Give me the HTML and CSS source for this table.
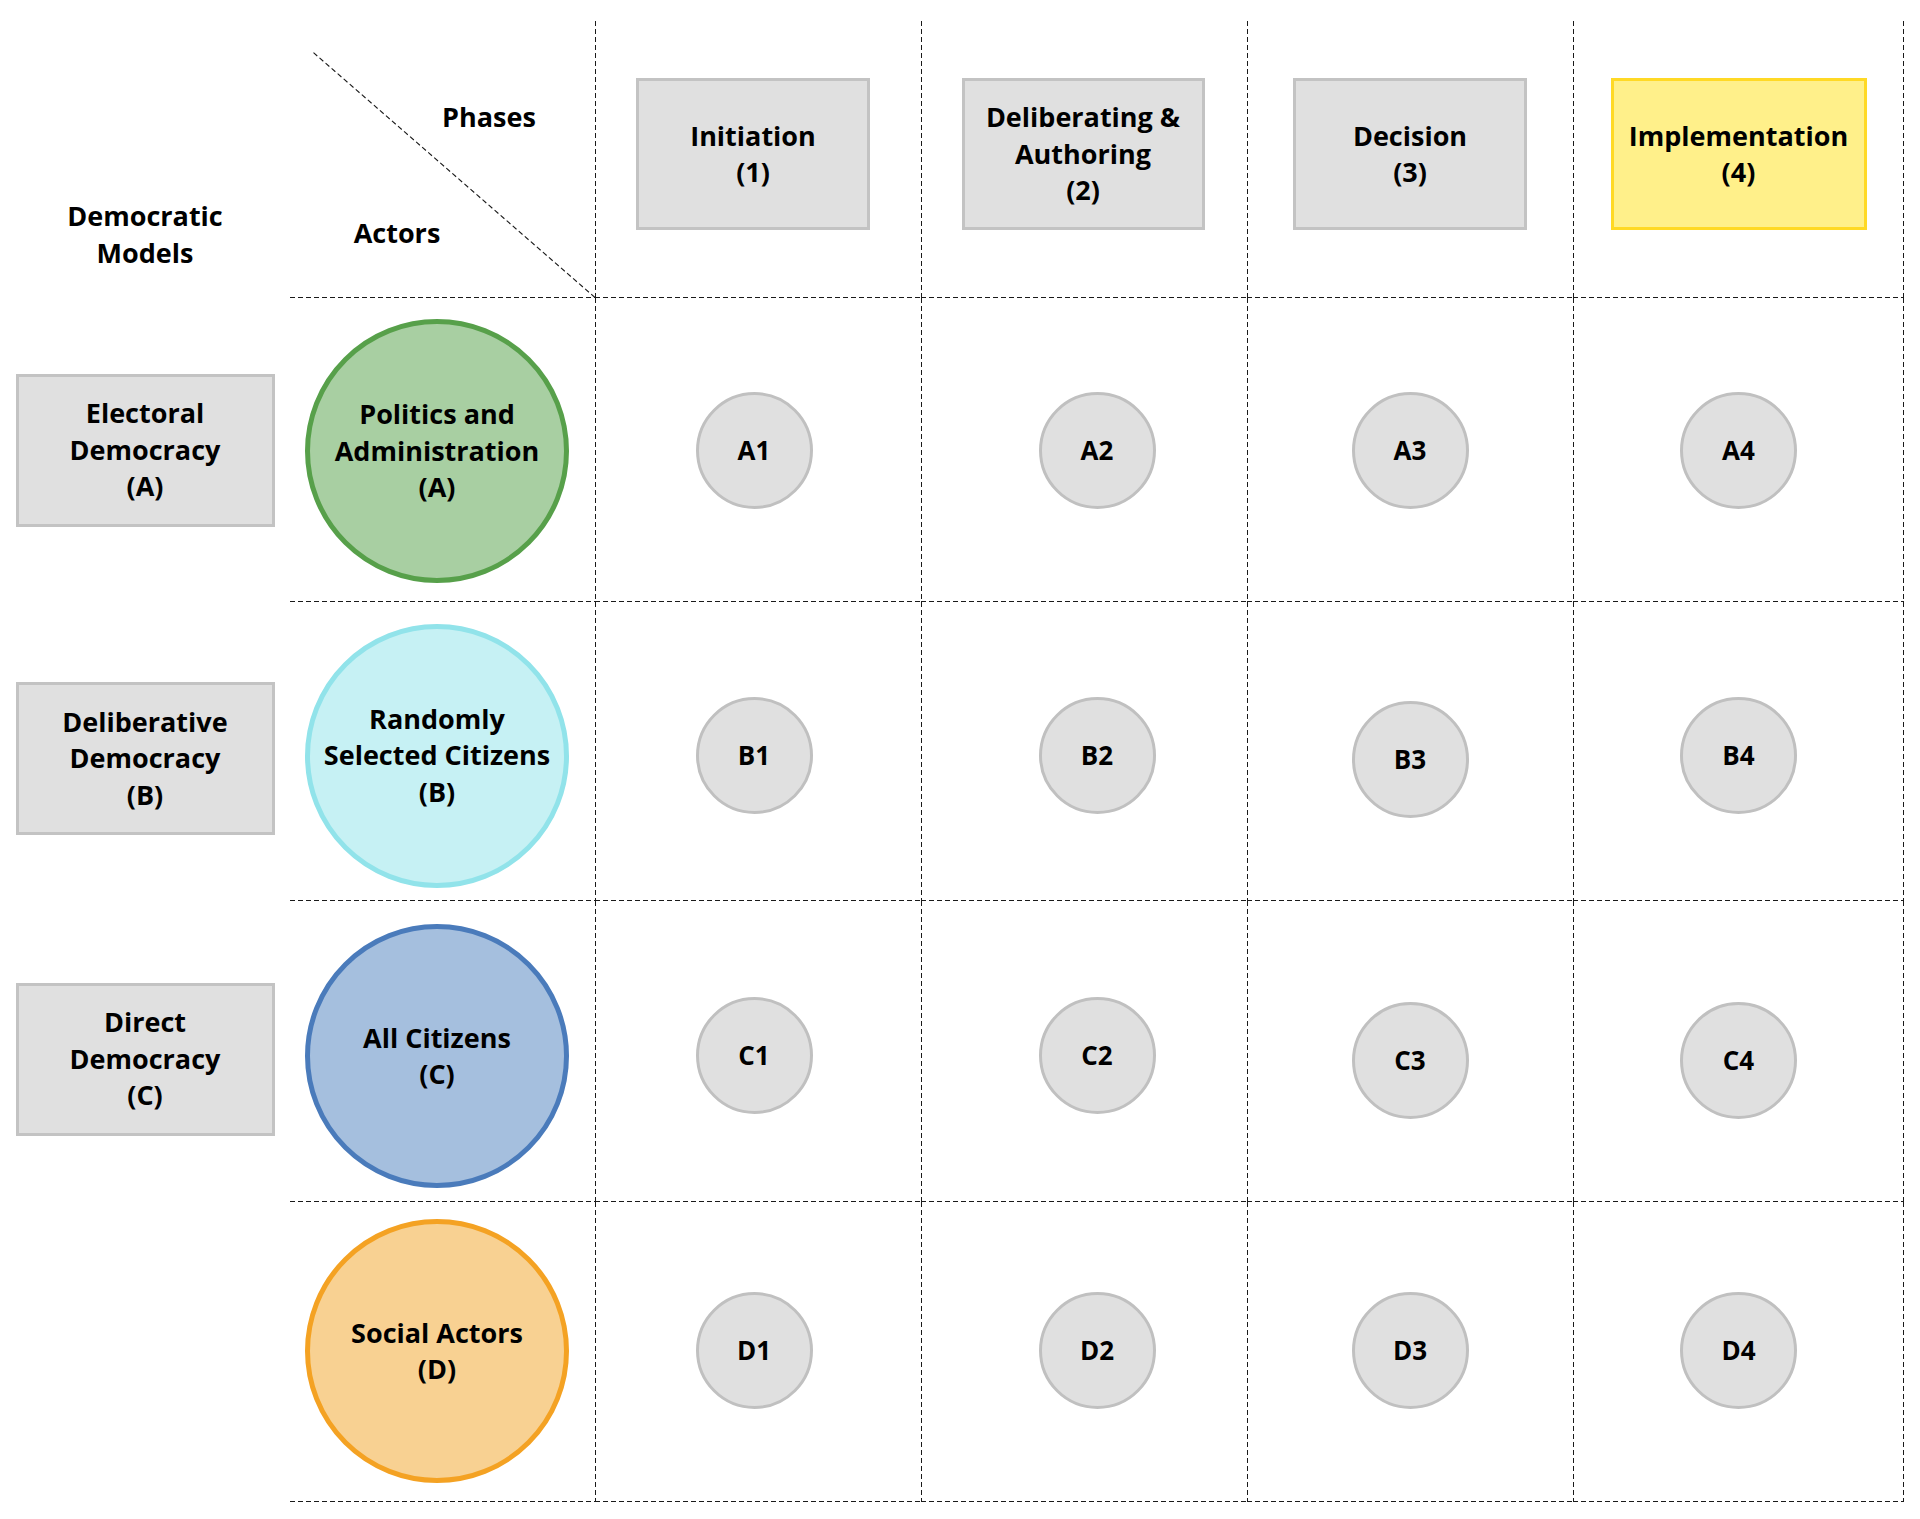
FILE: index.html
```html
<!DOCTYPE html>
<html lang="en">
<head>
<meta charset="utf-8">
<title>Democratic Models, Actors and Phases</title>
<link rel="stylesheet" href="styles.css">
</head>
<body>
<div class="board">
  <!-- header row -->
  <div class="models-head"><div class="models-title">Democratic<br>Models</div></div>
  <div class="corner">
    <svg class="diag" width="305" height="277" viewBox="0 0 305 277" aria-hidden="true">
      <line x1="23.5" y1="31.7" x2="305" y2="276.5" stroke="#1a1a1a" stroke-width="1.1" stroke-dasharray="5 3"/>
    </svg>
    <div class="lbl lbl-phases">Phases</div>
    <div class="lbl lbl-actors">Actors</div>
  </div>
  <div class="grid-cell"><div class="phase p1">Initiation<br>(1)</div></div>
  <div class="grid-cell"><div class="phase p2">Deliberating &amp;<br>Authoring<br>(2)</div></div>
  <div class="grid-cell"><div class="phase">Decision<br>(3)</div></div>
  <div class="grid-cell last"><div class="phase p4">Implementation<br>(4)</div></div>

  <!-- row A -->
  <div class="model-cell"><div class="model">Electoral<br>Democracy<br>(A)</div></div>
  <div class="actor-cell"><div class="actor actor-a">Politics and<br>Administration<br>(A)</div></div>
  <div class="grid-cell"><div class="dot x1">A1</div></div>
  <div class="grid-cell"><div class="dot x2">A2</div></div>
  <div class="grid-cell"><div class="dot">A3</div></div>
  <div class="grid-cell last"><div class="dot">A4</div></div>

  <!-- row B -->
  <div class="model-cell"><div class="model model-low">Deliberative<br>Democracy<br>(B)</div></div>
  <div class="actor-cell"><div class="actor actor-b">Randomly<br>Selected Citizens<br>(B)</div></div>
  <div class="grid-cell"><div class="dot x1 y-b">B1</div></div>
  <div class="grid-cell"><div class="dot x2 y-b">B2</div></div>
  <div class="grid-cell"><div class="dot y-b2">B3</div></div>
  <div class="grid-cell last"><div class="dot y-b">B4</div></div>

  <!-- row C -->
  <div class="model-cell"><div class="model model-low2">Direct<br>Democracy<br>(C)</div></div>
  <div class="actor-cell"><div class="actor actor-c">All Citizens<br>(C)</div></div>
  <div class="grid-cell"><div class="dot x1 y-c">C1</div></div>
  <div class="grid-cell"><div class="dot x2 y-c">C2</div></div>
  <div class="grid-cell"><div class="dot y-c2">C3</div></div>
  <div class="grid-cell last"><div class="dot y-c2">C4</div></div>

  <!-- row D -->
  <div class="model-cell"></div>
  <div class="actor-cell"><div class="actor actor-d">Social Actors<br>(D)</div></div>
  <div class="grid-cell"><div class="dot x1 y-d">D1</div></div>
  <div class="grid-cell"><div class="dot x2 y-d">D2</div></div>
  <div class="grid-cell"><div class="dot y-d">D3</div></div>
  <div class="grid-cell last"><div class="dot y-d">D4</div></div>
</div>
</body>
</html>
```

FILE: styles.css
```css
:root {
  --dash-h: repeating-linear-gradient(90deg, #1a1a1a 0 5px, transparent 5px 8px);
  --dash-v: repeating-linear-gradient(180deg, #1a1a1a 0 5px, transparent 5px 8px);
}

html, body {
  margin: 0;
  padding: 0;
  background: #ffffff;
}

body {
  font-family: "Open Sans", "Noto Sans", "DejaVu Sans", sans-serif;
  font-weight: 700;
  font-size: 27px;
  line-height: 36.5px;
  color: #000;
}

.board {
  display: grid;
  grid-template-columns: 290px 305px 326px 326px 326px 331px;
  grid-template-rows: 277px 304px 299px 301px 300px;
  padding-top: 21px;
  width: 1904px;
}

/* header */
.models-head {
  display: flex;
  justify-content: center;
  padding-top: 177px;
  text-align: center;
}

.corner {
  position: relative;
  background: var(--dash-h) left bottom / 100% 1px no-repeat;
}

.diag {
  position: absolute;
  left: 0;
  top: 0;
}

.lbl {
  width: 200px;
  text-align: center;
  white-space: nowrap;
}

.lbl-phases {
  margin-left: 99px;
  margin-top: 78px;
}

.lbl-actors {
  margin-left: 7px;
  margin-top: 79px;
}

/* grid cells with dashed lines */
.grid-cell {
  display: flex;
  align-items: center;
  justify-content: center;
  background:
    var(--dash-h) left bottom / 100% 1px no-repeat,
    var(--dash-v) left top / 1px 100% no-repeat;
}

.grid-cell.last {
  background:
    var(--dash-h) left bottom / 100% 1px no-repeat,
    var(--dash-v) left top / 1px 100% no-repeat,
    var(--dash-v) right top / 1px 100% no-repeat;
}

.actor-cell {
  display: flex;
  align-items: center;
  justify-content: center;
  background: var(--dash-h) left bottom / 100% 1px no-repeat;
}

.model-cell {
  display: flex;
  align-items: center;
  justify-content: center;
}

/* phase boxes */
.phase {
  box-sizing: border-box;
  width: 234px;
  height: 152px;
  margin-bottom: 11px;
  border: 3px solid #c3c3c3;
  background: #e0e0e0;
  display: flex;
  align-items: center;
  justify-content: center;
  text-align: center;
  white-space: nowrap;
}

.phase.p1 { margin-right: 10px; }
.phase.p2 { width: 243px; margin-right: 2px; }
.phase.p4 {
  width: 256px;
  background: #fff08a;
  border-color: #ffd925;
}

/* democratic model boxes */
.model {
  box-sizing: border-box;
  width: 259px;
  height: 153px;
  border: 3px solid #c3c3c3;
  background: #e0e0e0;
  display: flex;
  align-items: center;
  justify-content: center;
  text-align: center;
  white-space: nowrap;
}

.model-low { margin-top: 14px; }
.model-low2 { margin-top: 15px; }

/* actor circles */
.actor {
  box-sizing: border-box;
  width: 264px;
  height: 264px;
  border-radius: 50%;
  border: 5px solid;
  margin-right: 11px;
  display: flex;
  align-items: center;
  justify-content: center;
  text-align: center;
  white-space: nowrap;
}

.actor-a {
  background: #a8cfa2;
  border-color: #57a04a;
  margin-top: 2px;
}

.actor-b {
  background: #c6f1f4;
  border-color: #91e3ea;
  margin-top: 8px;
}

.actor-c {
  background: #a5bfde;
  border-color: #4a7bbb;
  margin-top: 9px;
}

.actor-d {
  background: #f8d192;
  border-color: #f4a223;
  margin-bottom: 2px;
}

/* small cell circles */
.dot {
  box-sizing: border-box;
  width: 117px;
  height: 117px;
  border-radius: 50%;
  border: 3px solid #c0c0c0;
  background: #e0e0e0;
  display: flex;
  align-items: center;
  justify-content: center;
  font-size: 26px;
}

.dot.x1 { margin-right: 8px; }
.dot.x2 { margin-left: 26px; }
.dot.y-b { margin-top: 7px; }
.dot.y-b2 { margin-top: 15px; }
.dot.y-c { margin-top: 8px; }
.dot.y-c2 { margin-top: 17px; }
.dot.y-d { margin-bottom: 4px; }
```
